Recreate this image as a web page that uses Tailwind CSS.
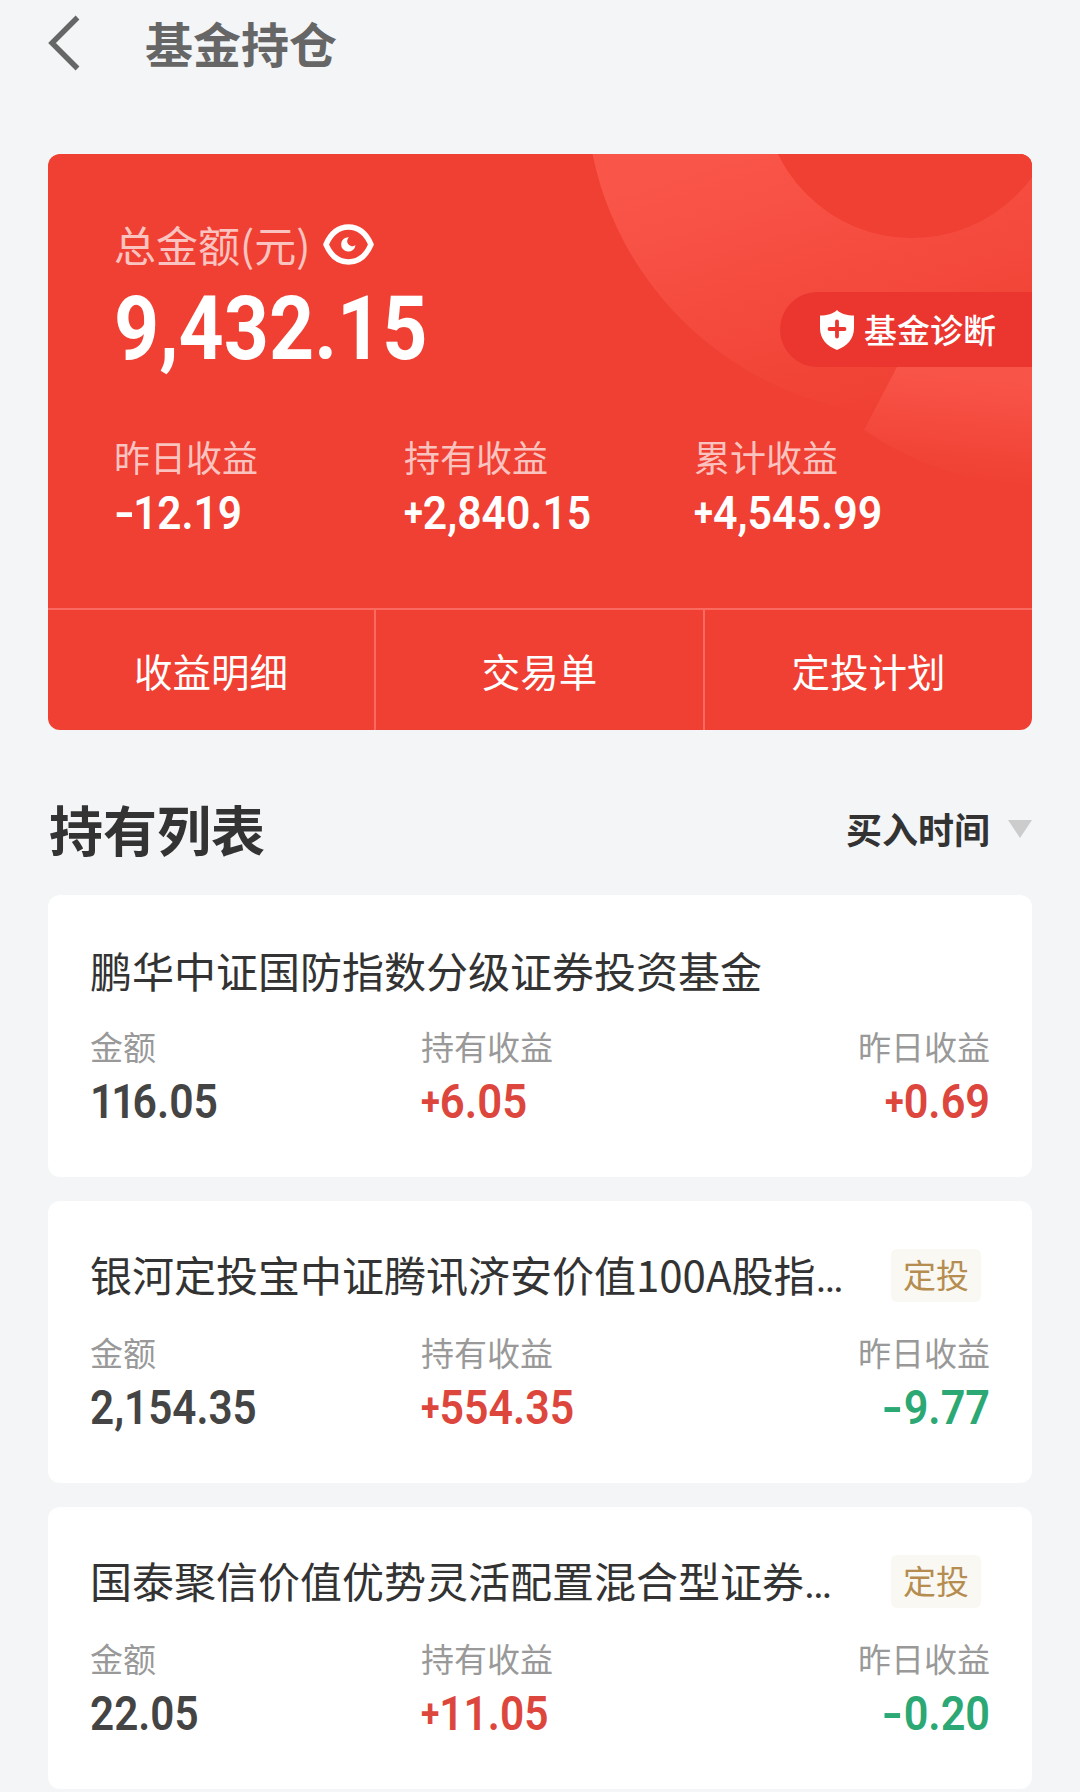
<!DOCTYPE html>
<html lang="zh-CN">
<head>
<meta charset="utf-8">
<title>基金持仓</title>
<script src="https://cdn.jsdelivr.net/npm/@tailwindcss/browser@4"></script>
</head>
<body class="bg-[#f3f5f7] font-['Noto_Sans_CJK_SC',sans-serif] text-[#333]">
<main class="w-[1080px] h-[1792px] overflow-hidden px-12">
  <header class="flex items-center h-20">
    <svg class="w-8 h-14 mt-1.5 shrink-0" viewBox="0 0 32 56" fill="none" stroke="#666" stroke-width="5.400"><path d="M29.500 2.500 L4 28 L29.500 53.500"/></svg>
    <h1 class="ml-[65px] pt-1 text-[48px] leading-[80px] font-bold text-[#666]">基金持仓</h1>
  </header>

  <section class="relative mt-[74px] h-[576px] rounded-xl overflow-hidden bg-[#ef4033] text-white flex flex-col">
    <svg class="absolute inset-0 w-[984px] h-[576px]" viewBox="48 154 984 576">
      <defs>
        <linearGradient id="ring" gradientUnits="userSpaceOnUse" x1="690" y1="170" x2="775" y2="445">
          <stop offset="0" stop-color="#fa5549"/><stop offset="1" stop-color="#ef4033"/>
        </linearGradient>
        <linearGradient id="piece" gradientUnits="userSpaceOnUse" x1="950" y1="375" x2="940" y2="478">
          <stop offset="0" stop-color="#f95448"/><stop offset="1" stop-color="#ef4033"/>
        </linearGradient>
      </defs>
      <circle cx="912" cy="89" r="326" fill="url(#ring)"/>
      <circle cx="912" cy="89" r="149" fill="#ef4033"/>
      <path d="M864 430 L897 367 V340 H1032 V485 Q940 482 864 430Z" fill="url(#piece)"/>
    </svg>
    <div class="absolute right-0 top-[138px] w-[252px] h-[75px] rounded-l-full bg-[#ea362f] flex items-center pl-10">
      <svg class="w-[34px] h-10" viewBox="0 0 34 40"><path d="M17 0 C21 4 27 5.500 34 5.500 V18 C34 29 27 36 17 40 C7 36 0 29 0 18 V5.500 C7 5.500 13 4 17 0Z" fill="#fff"/><path d="M17 11.500V26.500M9.500 19H24.500" stroke="#ea362f" stroke-width="3.800" stroke-linecap="round"/></svg>
      <span class="ml-[10px] text-[33px] leading-[71px] font-medium">基金诊断</span>
    </div>

    <div class="relative pl-[66px] pt-[60px]">
      <div class="flex items-center h-[60px]">
        <span class="text-[42px] leading-[60px] text-white/70">总金额(元)</span>
        <svg class="ml-[13px] w-[51px] h-[41px]" viewBox="0 0 51 41"><path d="M3 20.500 C8 9 16 3 25.500 3 S43 9 48 20.500 C43 32 35 38 25.500 38 S8 32 3 20.500Z" fill="none" stroke="#fff" stroke-width="5.600" stroke-linejoin="round"/><path d="M26 13.200 A7.200 7.200 0 1 0 32.500 21 A5 5 0 0 1 26 13.200Z" fill="#fff"/></svg>
      </div>
      <div class="h-[106px] pt-0.5 leading-[106px] text-[89px] font-bold font-[Roboto,sans-serif] origin-left scale-x-[.885]">9,432.15</div>
      <div class="mt-[51px] grid grid-cols-[290px_290px_290px]">
        <div><div class="text-[36px] leading-[50px] text-white/70">昨日收益</div><div class="h-[65px] leading-[64px] text-[47px] font-semibold font-[Roboto,sans-serif] origin-left scale-x-[.9]"><span class="inline-block origin-left scale-x-[1.35] mr-1">-</span>12.19</div></div>
        <div><div class="text-[36px] leading-[50px] text-white/70">持有收益</div><div class="h-[65px] leading-[64px] text-[47px] font-semibold font-[Roboto,sans-serif] origin-left scale-x-[.908]"><span class="inline-block -translate-y-[3px] text-[38px] font-bold leading-none">+</span>2,840.15</div></div>
        <div><div class="text-[36px] leading-[50px] text-white/70">累计收益</div><div class="h-[65px] leading-[64px] text-[47px] font-semibold font-[Roboto,sans-serif] origin-left scale-x-[.913]"><span class="inline-block -translate-y-[3px] text-[38px] font-bold leading-none">+</span>4,545.99</div></div>
      </div>
    </div>
    <div class="relative mt-auto h-[122px] border-t-2 border-[#fb6a60] grid grid-cols-[328px_329px_1fr] text-center text-[38.500px] leading-[120px]">
      <div class="border-r-2 border-[#fb6a60]">收益明细</div>
      <div class="border-r-2 border-[#fb6a60]">交易单</div>
      <div>定投计划</div>
    </div>
  </section>

  <div class="mt-[63px] mb-[32px] h-[70px] flex items-center justify-between">
    <h2 class="pl-px pt-0.5 text-[54px] leading-[70px] font-bold">持有列表</h2>
    <div class="flex items-center gap-[18px] text-[36px] leading-[70px] font-bold">买入时间<svg class="w-6 h-[18px] mt-0.5" viewBox="0 0 24 18"><path d="M0 0H24L12 18Z" fill="#ccc"/></svg></div>
  </div>

  <div class="flex flex-col gap-6">
    <article class="h-[282px] shrink-0 rounded-xl bg-white pl-[42px] pr-[42px] pt-[45px]">
      <div class="text-[42px] leading-[60px] h-[60px]">鹏华中证国防指数分级证券投资基金</div>
      <div class="mt-[23px] grid grid-cols-[331px_1fr_auto]">
        <div><div class="text-[33px] leading-[46px] text-[#999]">金额</div><div class="h-[67px] leading-[65px] text-[48px] font-semibold font-[Roboto,sans-serif] text-[#444] origin-left scale-x-[.89]"><span class="tracking-[-3.500px]">11</span>6.05</div></div>
        <div><div class="text-[33px] leading-[46px] text-[#999]">持有收益</div><div class="h-[67px] leading-[65px] text-[48px] font-semibold font-[Roboto,sans-serif] text-[#dd463c] origin-left scale-x-[.91]"><span class="inline-block -translate-y-[3px] text-[38px] font-bold leading-none">+</span>6.05</div></div>
        <div class="text-right"><div class="text-[33px] leading-[46px] text-[#999]">昨日收益</div><div class="h-[67px] leading-[65px] text-[48px] font-semibold font-[Roboto,sans-serif] text-[#dd463c] origin-right scale-x-[.9]"><span class="inline-block -translate-y-[3px] text-[38px] font-bold leading-none">+</span>0.69</div></div>
      </div>
    </article>

    <article class="h-[282px] shrink-0 rounded-xl bg-white pl-[42px] pr-[42px] pt-[45px]">
      <div class="flex items-center justify-between h-[60px] pr-[9px]">
        <div class="text-[42px] leading-[60px] whitespace-nowrap">银河定投宝中证腾讯济安价值100A股指<span class="font-[Roboto,sans-serif] text-[42px]">…</span></div>
        <span class="-mt-0.5 h-[53px] leading-[51px] px-3 rounded-md bg-[#faf8f2] text-[33px] text-[#b58d50]">定投</span>
      </div>
      <div class="mt-[23px] grid grid-cols-[331px_1fr_auto]">
        <div><div class="text-[33px] leading-[46px] text-[#999]">金额</div><div class="h-[67px] leading-[65px] text-[48px] font-semibold font-[Roboto,sans-serif] text-[#444] origin-left scale-x-[.88]">2,154.35</div></div>
        <div><div class="text-[33px] leading-[46px] text-[#999]">持有收益</div><div class="h-[67px] leading-[65px] text-[48px] font-semibold font-[Roboto,sans-serif] text-[#dd463c] origin-left scale-x-[.893]"><span class="inline-block -translate-y-[3px] text-[38px] font-bold leading-none">+</span>554.35</div></div>
        <div class="text-right"><div class="text-[33px] leading-[46px] text-[#999]">昨日收益</div><div class="h-[67px] leading-[65px] text-[48px] font-semibold font-[Roboto,sans-serif] text-[#2ba873] origin-right scale-x-[.9]"><span class="inline-block origin-right scale-x-[1.35]">-</span>9.77</div></div>
      </div>
    </article>

    <article class="h-[282px] shrink-0 rounded-xl bg-white pl-[42px] pr-[42px] pt-[45px]">
      <div class="flex items-center justify-between h-[60px] pr-[9px]">
        <div class="text-[42px] leading-[60px] whitespace-nowrap">国泰聚信价值优势灵活配置混合型证券<span class="font-[Roboto,sans-serif] text-[42px]">…</span></div>
        <span class="-mt-0.5 h-[53px] leading-[51px] px-3 rounded-md bg-[#faf8f2] text-[33px] text-[#b58d50]">定投</span>
      </div>
      <div class="mt-[23px] grid grid-cols-[331px_1fr_auto]">
        <div><div class="text-[33px] leading-[46px] text-[#999]">金额</div><div class="h-[67px] leading-[65px] text-[48px] font-semibold font-[Roboto,sans-serif] text-[#444] origin-left scale-x-[.88]">22.05</div></div>
        <div><div class="text-[33px] leading-[46px] text-[#999]">持有收益</div><div class="h-[67px] leading-[65px] text-[48px] font-semibold font-[Roboto,sans-serif] text-[#dd463c] origin-left scale-x-[.885]"><span class="inline-block -translate-y-[3px] text-[38px] font-bold leading-none">+</span>11.05</div></div>
        <div class="text-right"><div class="text-[33px] leading-[46px] text-[#999]">昨日收益</div><div class="h-[67px] leading-[65px] text-[48px] font-semibold font-[Roboto,sans-serif] text-[#2ba873] origin-right scale-x-[.9]"><span class="inline-block origin-right scale-x-[1.35]">-</span>0.20</div></div>
      </div>
    </article>
  </div>
</main>
</body>
</html>
